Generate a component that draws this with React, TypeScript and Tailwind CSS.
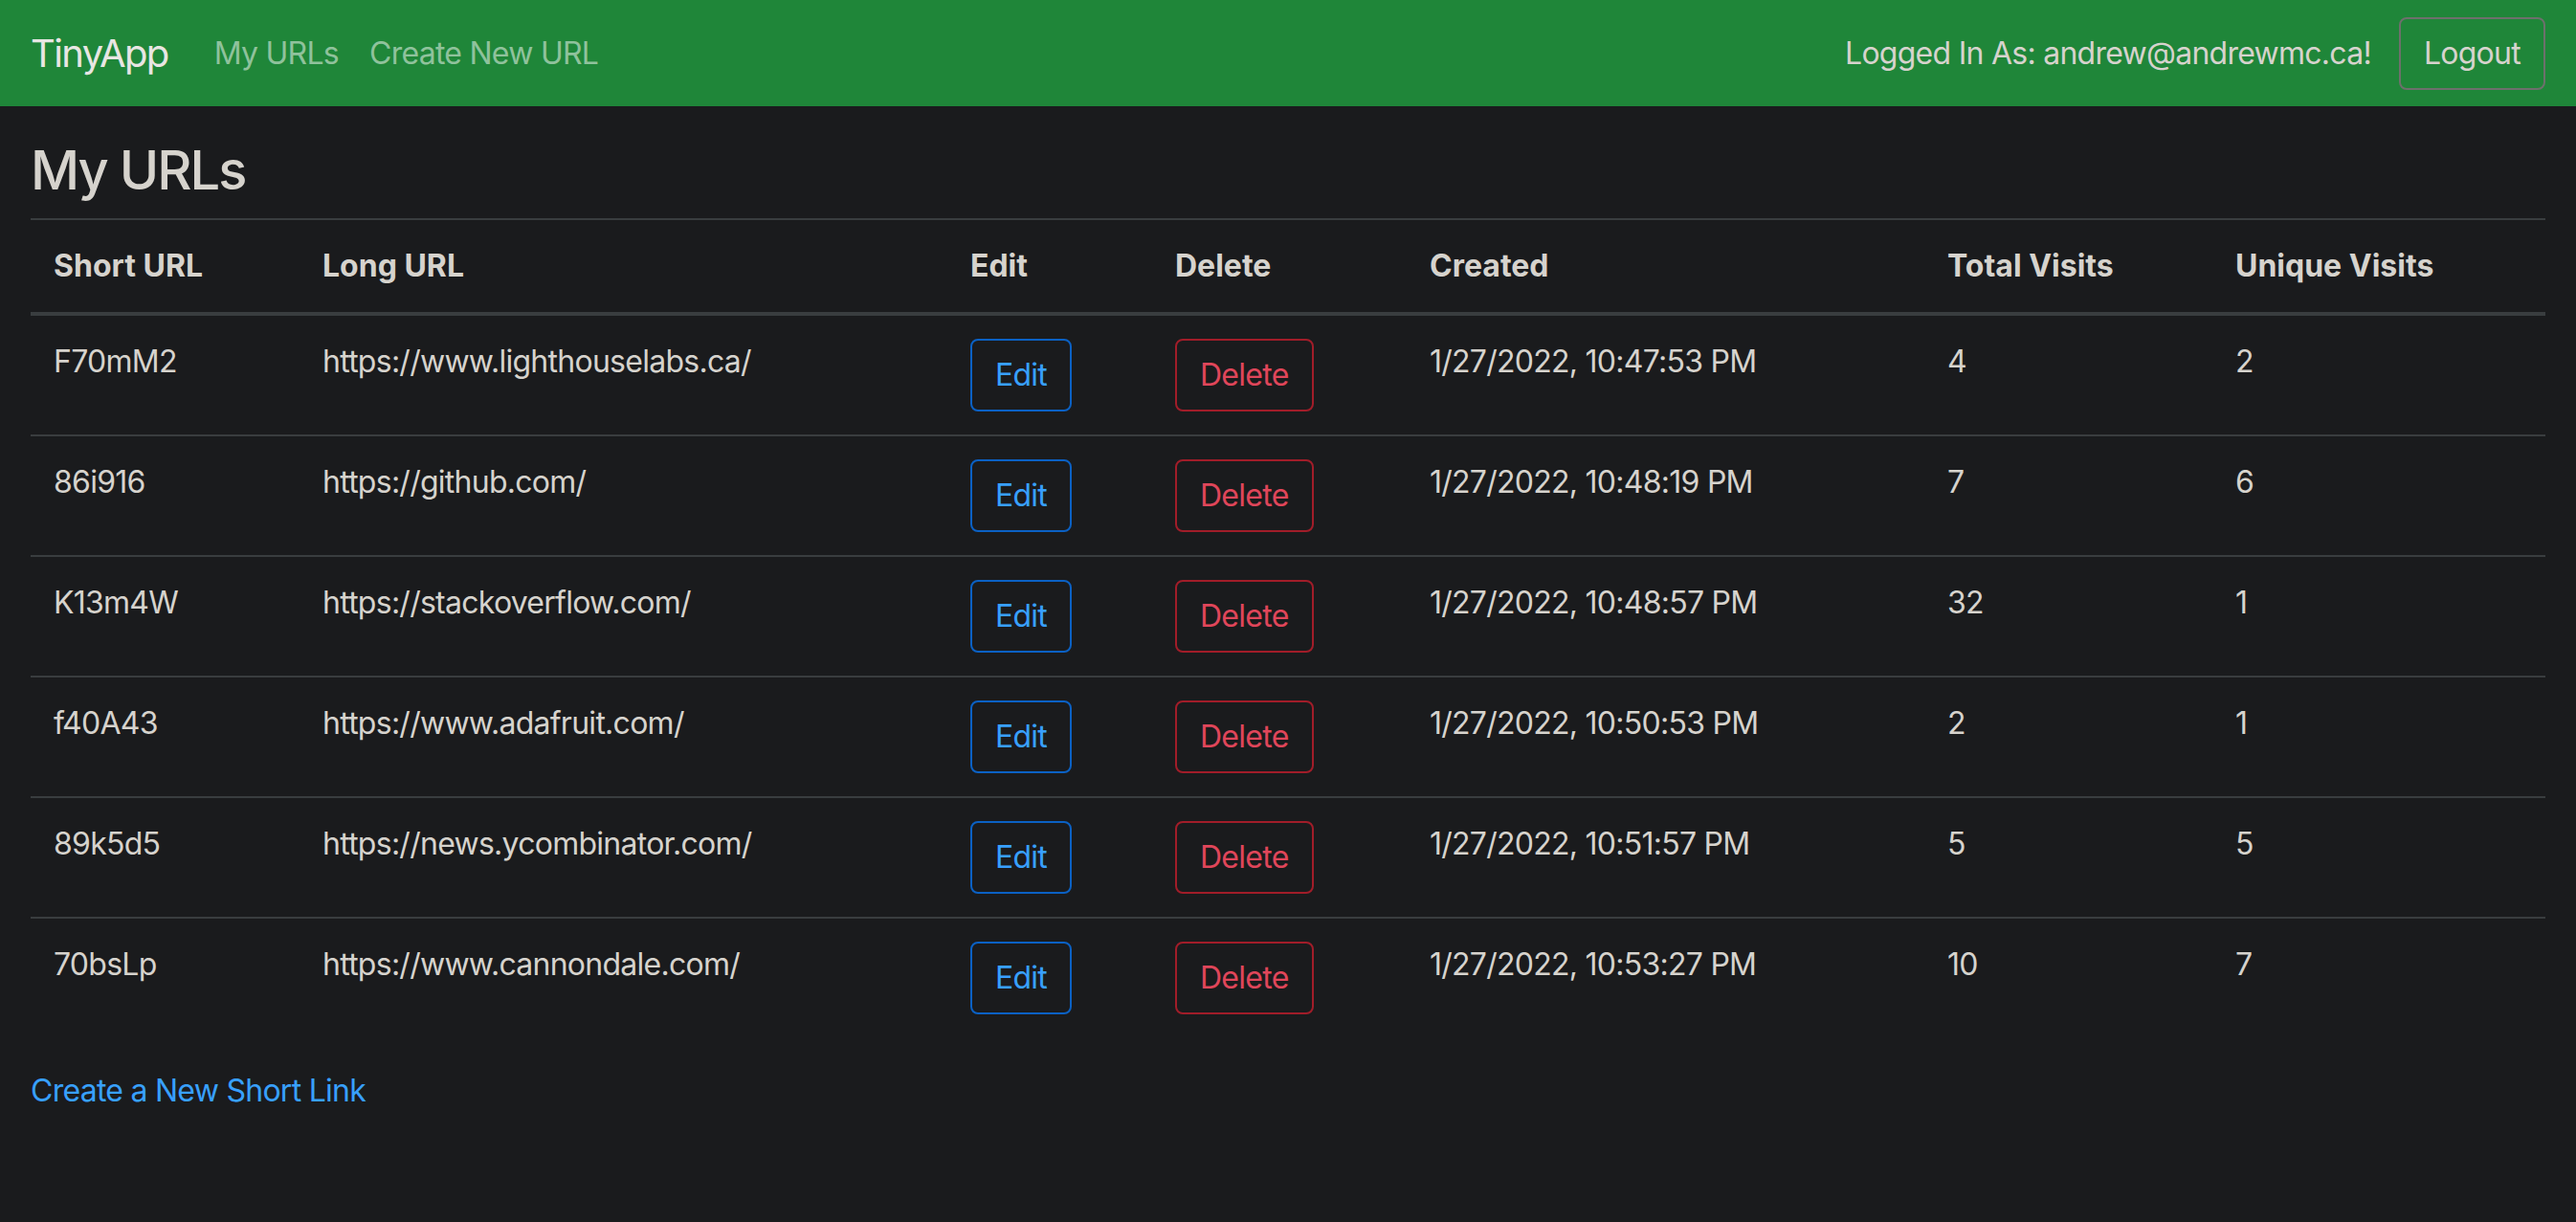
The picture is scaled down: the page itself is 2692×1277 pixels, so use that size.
import React from "react";

const urls = [
  { id: "F70mM2", long: "https://www.lighthouselabs.ca/", created: "1/27/2022, 10:47:53 PM", total: 4, unique: 2 },
  { id: "86i916", long: "https://github.com/", created: "1/27/2022, 10:48:19 PM", total: 7, unique: 6 },
  { id: "K13m4W", long: "https://stackoverflow.com/", created: "1/27/2022, 10:48:57 PM", total: 32, unique: 1 },
  { id: "f40A43", long: "https://www.adafruit.com/", created: "1/27/2022, 10:50:53 PM", total: 2, unique: 1 },
  { id: "89k5d5", long: "https://news.ycombinator.com/", created: "1/27/2022, 10:51:57 PM", total: 5, unique: 5 },
  { id: "70bsLp", long: "https://www.cannondale.com/", created: "1/27/2022, 10:53:27 PM", total: 10, unique: 7 },
];

const headers = ["Short URL", "Long URL", "Edit", "Delete", "Created", "Total Visits", "Unique Visits"];

export default function App() {
  return (
    <div
      className="min-h-screen bg-[#1a1b1d] text-[#d6d3cd] text-[32px] leading-[48px] tracking-[-0.023em]"
      style={{ fontFamily: "Inter, 'Liberation Sans', sans-serif" }}
    >
      {/* Navbar */}
      <nav className="h-[111px] bg-[#1f8639] px-[32px] flex items-center">
        <a href="#" className="text-[40px] leading-[60px] tracking-[-0.04em] text-[#e8e6e3] mr-[32px]">
          TinyApp
        </a>
        <a href="#" className="px-[16px] text-[#8fc29c]">My URLs</a>
        <a href="#" className="px-[16px] text-[#8fc29c]">Create New URL</a>
        <div className="ml-auto flex items-center">
          <span className="mr-[29px]">Logged In As: andrew@andrewmc.ca!</span>
          <button className="h-[76px] px-[24px] border-2 border-[#6d706c] rounded-[8px] text-[#d6d3cd]">
            Logout
          </button>
        </div>
      </nav>

      {/* Content */}
      <main className="px-[32px] pt-[34px]">
        <h3 className="text-[56px] leading-[67px] font-medium tracking-[-0.035em] mb-[16px] text-[#d6d3cd]">My URLs</h3>

        <table className="w-full table-fixed border-collapse mb-[32px]">
          <colgroup>
            <col className="w-[281px]" />
            <col className="w-[677px]" />
            <col className="w-[214px]" />
            <col className="w-[266px]" />
            <col className="w-[541px]" />
            <col className="w-[301px]" />
            <col />
          </colgroup>
          <thead>
            <tr>
              {headers.map((h) => (
                <th
                  key={h}
                  className="text-left align-bottom font-bold tracking-normal p-[24px] border-t-2 border-b-4 border-[#393d3f]"
                >
                  {h}
                </th>
              ))}
            </tr>
          </thead>
          <tbody>
            {urls.map((u) => (
              <tr key={u.id}>
                <td className="align-top p-[24px] border-t-2 border-[#393d3f]">{u.id}</td>
                <td className="align-top p-[24px] border-t-2 border-[#393d3f] whitespace-nowrap">{u.long}</td>
                <td className="align-top p-[24px] border-t-2 border-[#393d3f]">
                  <button className="h-[76px] px-[24px] border-2 border-[#0b61c4] rounded-[8px] text-[#38a0ff]">
                    Edit
                  </button>
                </td>
                <td className="align-top p-[24px] border-t-2 border-[#393d3f]">
                  <button className="h-[76px] px-[24px] border-2 border-[#a11d29] rounded-[8px] text-[#e0465a]">
                    Delete
                  </button>
                </td>
                <td className="align-top p-[24px] border-t-2 border-[#393d3f] whitespace-nowrap">{u.created}</td>
                <td className="align-top p-[24px] border-t-2 border-[#393d3f]">{u.total}</td>
                <td className="align-top p-[24px] border-t-2 border-[#393d3f]">{u.unique}</td>
              </tr>
            ))}
          </tbody>
        </table>

        <a href="#" className="text-[#38a0ff]">Create a New Short Link</a>
      </main>
    </div>
  );
}
